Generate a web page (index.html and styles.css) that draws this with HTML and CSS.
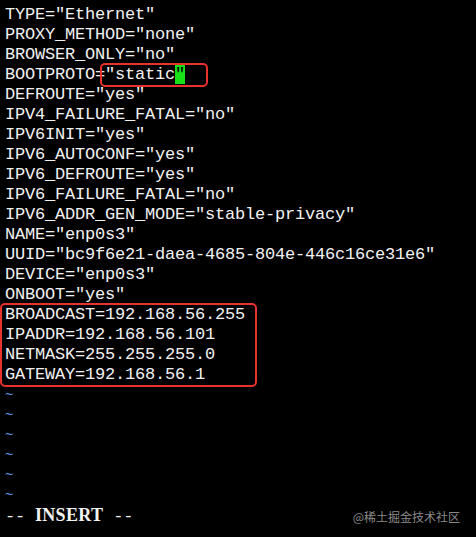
FILE: index.html
```html
<!DOCTYPE html>
<html>
<head>
<meta charset="utf-8">
<link rel="stylesheet" href="styles.css">
</head>
<body>
<div class="term">
  <div class="ln">TYPE="Ethernet"</div>
  <div class="ln">PROXY_METHOD="none"</div>
  <div class="ln">BROWSER_ONLY="no"</div>
  <div class="ln">BOOTPROTO=<span class="mark">"static<span class="cursor">"</span></span></div>
  <div class="ln">DEFROUTE="yes"</div>
  <div class="ln">IPV4_FAILURE_FATAL="no"</div>
  <div class="ln">IPV6INIT="yes"</div>
  <div class="ln">IPV6_AUTOCONF="yes"</div>
  <div class="ln">IPV6_DEFROUTE="yes"</div>
  <div class="ln">IPV6_FAILURE_FATAL="no"</div>
  <div class="ln">IPV6_ADDR_GEN_MODE="stable-privacy"</div>
  <div class="ln">NAME="enp0s3"</div>
  <div class="ln">UUID="bc9f6e21-daea-4685-804e-446c16ce31e6"</div>
  <div class="ln">DEVICE="enp0s3"</div>
  <div class="ln">ONBOOT="yes"</div>
  <div class="block">
    <div class="ln">BROADCAST=192.168.56.255</div>
    <div class="ln">IPADDR=192.168.56.101</div>
    <div class="ln">NETMASK=255.255.255.0</div>
    <div class="ln">GATEWAY=192.168.56.1</div>
  </div>
  <div class="ln tilde">~</div>
  <div class="ln tilde">~</div>
  <div class="ln tilde">~</div>
  <div class="ln tilde">~</div>
  <div class="ln tilde">~</div>
  <div class="ln tilde">~</div>
  <div class="ln status">
    <span class="mode">-- <b class="word">INSERT</b> --</span>
    <span class="wm">@稀土掘金技术社区</span>
  </div>
</div>
</body>
</html>
```

FILE: styles.css
```css
html, body {
  margin: 0;
  padding: 0;
  background: #000;
}
body {
  width: 476px;
  height: 537px;
  overflow: hidden;
}
.term {
  padding: 5px 0 0 5px;
  font-family: "Liberation Mono", "DejaVu Sans Mono", monospace;
  font-size: 17px;
  letter-spacing: -0.2px;
  color: #f2f2f2;
}
.ln {
  height: 20px;
  line-height: 20px;
  white-space: pre;
}
.mark {
  display: inline-block;
  height: 20px;
  vertical-align: top;
  margin-left: -3px;
  padding-left: 3px;
  padding-right: 21px;
  outline: 2px solid #e8322c;
  border-radius: 3px;
}
.cursor {
  background: #16e016;
  color: #000;
}
.block {
  width: 250px;
  margin-left: -3px;
  padding-left: 3px;
  outline: 2px solid #e8322c;
  border-radius: 3px;
}
.tilde {
  color: #5f9fe0;
  font-size: 14px;
}
.status {
  display: flex;
  justify-content: space-between;
  padding-right: 16px;
}
.mode {
  font-weight: normal;
}
.word {
  display: inline-block;
  font-family: "Liberation Serif", serif;
  font-size: 18px;
  letter-spacing: 0.3px;
}
.wm {
  font-family: "Noto Sans CJK SC", sans-serif;
  font-size: 12px;
  color: #8a8a8a;
  letter-spacing: 0;
  padding-top: 2px;
}
```
